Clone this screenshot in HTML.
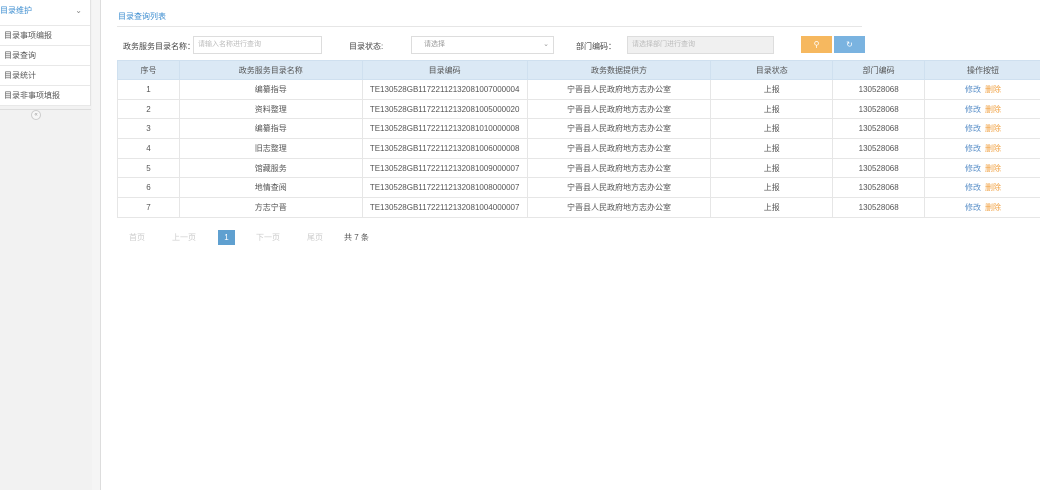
<!DOCTYPE html>
<html><head><meta charset="utf-8"><style>
*{margin:0;padding:0;box-sizing:border-box}
body{width:1040px;height:490px;overflow:hidden;background:#fff;font-family:"Liberation Sans","Noto Sans CJK SC",sans-serif;font-size:8px;color:#555;position:relative}
.side{position:absolute;left:0;top:0;width:101px;height:490px;background:#f2f2f2;border-right:1px solid #ddd}
.menu{position:absolute;left:0;top:0;width:91px;background:#fff;border-right:1px solid #e3e3e3}
.menu div{height:20px;line-height:20px;padding-left:4px;border-bottom:1px solid #e8e8e8;font-size:8px;color:#555}
.menu .h{height:26px;line-height:22px;color:#3c8dd0;padding-left:0;position:relative}
.menu .h span{position:absolute;right:8px;top:0;color:#888}
.coll{position:absolute;left:0;top:109px;width:91px;height:1px;background:#ddd}
.circ{position:absolute;left:31px;top:110px;width:10px;height:10px;border:1px solid #ccc;border-radius:50%;background:#f7f7f7;font-size:6px;line-height:8px;text-align:center;color:#999}
.sb{position:absolute;left:92px;top:0;width:8px;height:490px;background:#f5f5f5}
.title{position:absolute;left:118px;top:11px;color:#3c8dd0;font-size:8px}
.tline{position:absolute;left:117px;top:26px;width:745px;height:1px;background:#e6e6e6}
.lbl{position:absolute;top:41px;font-size:8px;color:#444}
.inp{position:absolute;top:36px;height:18px;border:1px solid #ddd;font-size:7px;color:#bbb;line-height:16px;padding-left:4px}
.btn{position:absolute;top:36px;width:31px;height:17px;color:#fff;text-align:center;line-height:17px;font-size:8px}
table{position:absolute;left:117px;top:60px;width:925px;border-collapse:collapse;font-size:8px;color:#555}
th{background:#dbe9f5;font-weight:normal;height:19px;border:1px solid #cfe0ef;color:#555}
td{height:19.7px;text-align:center;border:1px solid #e6e6e6}
.e{color:#5a8fc8}.d{color:#f0a040;margin-left:4px}
.pg{position:absolute;top:230px;height:15px;line-height:15px;font-size:8px;color:#ccc}
</style></head><body>
<div class="side"></div>
<div class="menu">
<div class="h">目录维护<span>⌄</span></div>
<div>目录事项编报</div><div>目录查询</div><div>目录统计</div><div>目录非事项填报</div>
</div>
<div class="coll"></div><div class="circ">«</div>
<div class="sb"></div>
<div class="title">目录查询列表</div>
<div class="tline"></div>
<div class="lbl" style="left:123px">政务服务目录名称：</div>
<div class="inp" style="left:193px;width:129px">请输入名称进行查询</div>
<div class="lbl" style="left:349px">目录状态:</div>
<div class="inp" style="left:411px;width:143px;color:#999;padding-left:12px">请选择<span style="position:absolute;right:4px;color:#999">⌄</span></div>
<div class="lbl" style="left:576px">部门编码：</div>
<div class="inp" style="left:627px;width:147px;background:#f0f0f0">请选择部门进行查询</div>
<div class="btn" style="left:801px;background:#f6b85f">&#9906;</div>
<div class="btn" style="left:834px;background:#7ab3e0">↻</div>
<table>
<colgroup><col style="width:62px"><col style="width:183px"><col style="width:165px"><col style="width:184px"><col style="width:122px"><col style="width:92px"><col style="width:117px"></colgroup>
<tr><th>序号</th><th>政务服务目录名称</th><th>目录编码</th><th>政务数据提供方</th><th>目录状态</th><th>部门编码</th><th>操作按钮</th></tr>
<tr><td>1</td><td>编纂指导</td><td>TE130528GB11722112132081007000004</td><td>宁晋县人民政府地方志办公室</td><td>上报</td><td>130528068</td><td><span class="e">修改</span><span class="d">删除</span></td></tr>
<tr><td>2</td><td>资料整理</td><td>TE130528GB11722112132081005000020</td><td>宁晋县人民政府地方志办公室</td><td>上报</td><td>130528068</td><td><span class="e">修改</span><span class="d">删除</span></td></tr>
<tr><td>3</td><td>编纂指导</td><td>TE130528GB11722112132081010000008</td><td>宁晋县人民政府地方志办公室</td><td>上报</td><td>130528068</td><td><span class="e">修改</span><span class="d">删除</span></td></tr>
<tr><td>4</td><td>旧志整理</td><td>TE130528GB11722112132081006000008</td><td>宁晋县人民政府地方志办公室</td><td>上报</td><td>130528068</td><td><span class="e">修改</span><span class="d">删除</span></td></tr>
<tr><td>5</td><td>馆藏服务</td><td>TE130528GB11722112132081009000007</td><td>宁晋县人民政府地方志办公室</td><td>上报</td><td>130528068</td><td><span class="e">修改</span><span class="d">删除</span></td></tr>
<tr><td>6</td><td>地情查阅</td><td>TE130528GB11722112132081008000007</td><td>宁晋县人民政府地方志办公室</td><td>上报</td><td>130528068</td><td><span class="e">修改</span><span class="d">删除</span></td></tr>
<tr><td>7</td><td>方志宁晋</td><td>TE130528GB11722112132081004000007</td><td>宁晋县人民政府地方志办公室</td><td>上报</td><td>130528068</td><td><span class="e">修改</span><span class="d">删除</span></td></tr>
</table>
<div class="pg" style="left:129px">首页</div>
<div class="pg" style="left:172px">上一页</div>
<div class="pg" style="left:218px;width:17px;background:#5fa0d0;color:#fff;text-align:center">1</div>
<div class="pg" style="left:256px">下一页</div>
<div class="pg" style="left:307px">尾页</div>
<div class="pg" style="left:344px;color:#555">共 7 条</div>
</body></html>
